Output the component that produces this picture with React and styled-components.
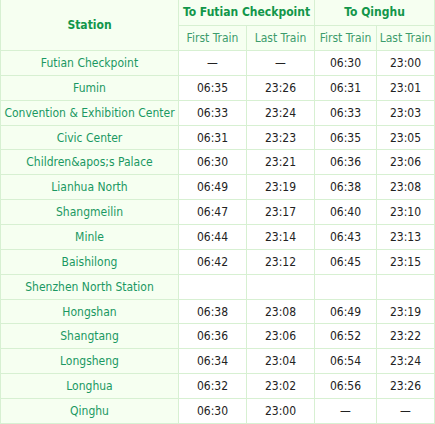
import React from "react";
import styled, { createGlobalStyle } from "styled-components";

const rows = [
  ["Futian Checkpoint", "—", "—", "06:30", "23:00"],
  ["Fumin", "06:35", "23:26", "06:31", "23:01"],
  ["Convention & Exhibition Center", "06:33", "23:24", "06:33", "23:03"],
  ["Civic Center", "06:31", "23:23", "06:35", "23:05"],
  ["Children&apos;s Palace", "06:30", "23:21", "06:36", "23:06"],
  ["Lianhua North", "06:49", "23:19", "06:38", "23:08"],
  ["Shangmeilin", "06:47", "23:17", "06:40", "23:10"],
  ["Minle", "06:44", "23:14", "06:43", "23:13"],
  ["Baishilong", "06:42", "23:12", "06:45", "23:15"],
  ["Shenzhen North Station", "", "", "", ""],
  ["Hongshan", "06:38", "23:08", "06:49", "23:19"],
  ["Shangtang", "06:36", "23:06", "06:52", "23:22"],
  ["Longsheng", "06:34", "23:04", "06:54", "23:24"],
  ["Longhua", "06:32", "23:02", "06:56", "23:26"],
  ["Qinghu", "06:30", "23:00", "—", "—"],
];

const GlobalStyle = createGlobalStyle`
  body {
    margin: 0;
    background: #fff;
    font-family: "DejaVu Sans Condensed", "DejaVu Sans", sans-serif;
  }
`;

const Table = styled.table`
  border-collapse: collapse;
  table-layout: fixed;
  width: 434px;
  margin-top: -1px;
  font-size: 12px;
`;

const Row = styled.tr`
  height: ${(p) => (p.$head ? "25.5px" : "24.86px")};
`;

const Cell = styled.td`
  border: 1px solid #d7f0d2;
  padding: 0;
  text-align: center;
  vertical-align: middle;
  white-space: nowrap;
  background: ${(p) => (p.$station ? "#f6fff1" : "#fff")};
  color: ${(p) => (p.$station ? "#1a9862" : "#222")};
`;

const Head = styled.th`
  border: 1px solid #d7f0d2;
  padding: 0;
  background: #f6fff1;
  color: ${(p) => (p.$sub ? "#3d9c6c" : "#12964a")};
  font-weight: ${(p) => (p.$sub ? "normal" : "bold")};
  text-align: center;
  white-space: nowrap;
`;

export default function App() {
  return (
    <>
      <GlobalStyle />
      <Table>
        <colgroup>
          <col style={{ width: 178 }} />
          <col style={{ width: 68 }} />
          <col style={{ width: 68 }} />
          <col style={{ width: 62 }} />
          <col style={{ width: 58 }} />
        </colgroup>
        <thead>
          <Row $head>
            <Head rowSpan={2}>Station</Head>
            <Head colSpan={2}>To Futian Checkpoint</Head>
            <Head colSpan={2}>To Qinghu</Head>
          </Row>
          <Row $head>
            <Head $sub>First Train</Head>
            <Head $sub>Last Train</Head>
            <Head $sub>First Train</Head>
            <Head $sub>Last Train</Head>
          </Row>
        </thead>
        <tbody>
          {rows.map(([name, ...times]) => (
            <Row key={name}>
              <Cell $station>{name}</Cell>
              {times.map((t, i) => (
                <Cell key={i}>{t}</Cell>
              ))}
            </Row>
          ))}
        </tbody>
      </Table>
    </>
  );
}
